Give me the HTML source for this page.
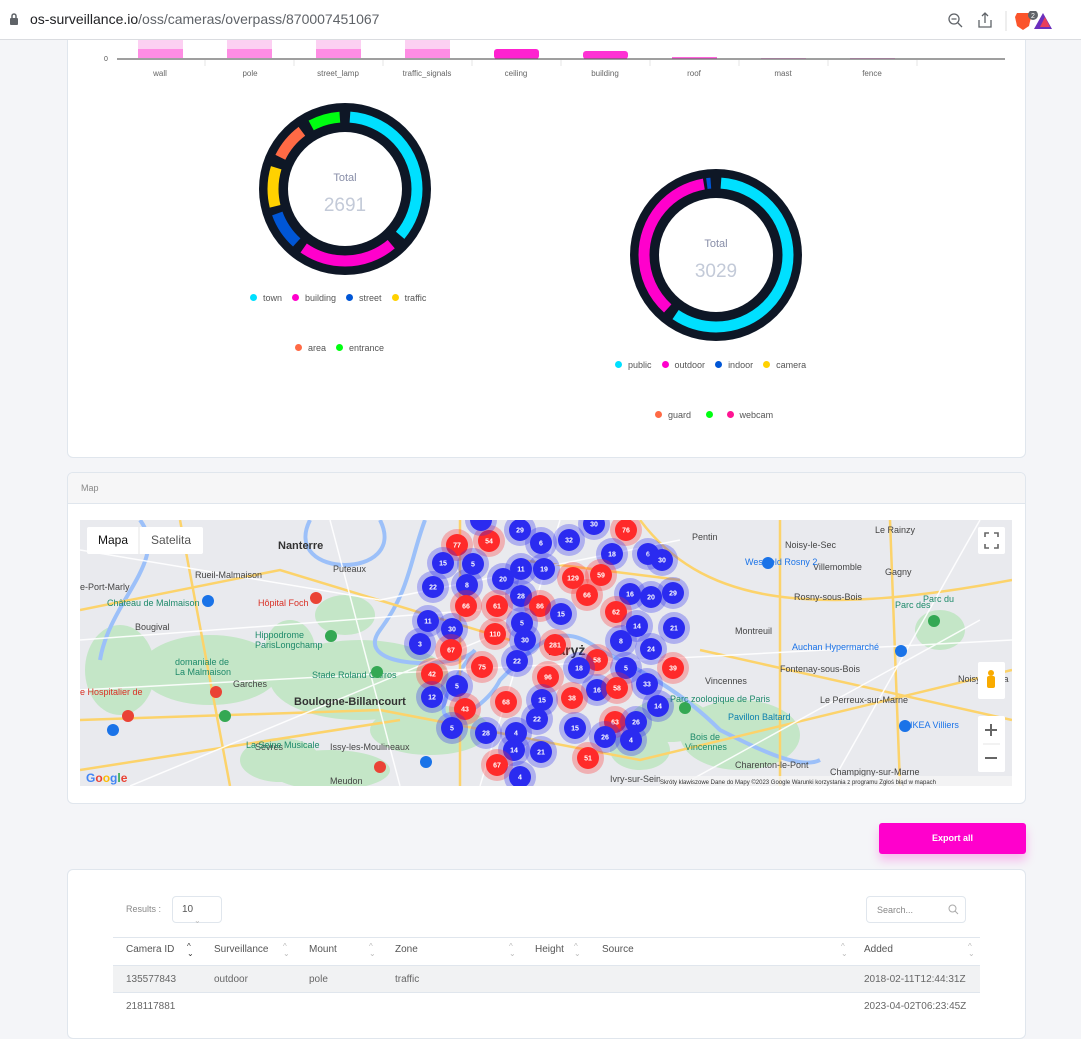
<!DOCTYPE html>
<html><head><meta charset="utf-8"><style>
*{margin:0;padding:0;box-sizing:border-box}
body{width:1081px;height:1021px;overflow:hidden;background:#f4f5f8;font-family:"Liberation Sans",sans-serif;position:relative;color:#3b3f5c}
.abs{position:absolute}
.bar{top:0;left:0;width:1081px;height:40px;background:#fff;border-bottom:1px solid #dadce0}
.tabs{top:0;left:0;width:1081px;height:5px;background:#e8eaed}
.card{background:#fff;border:1px solid #e0e6ed;border-radius:6px}
.lg{font-size:9px;color:#555;position:absolute;white-space:nowrap}
.lg i{display:inline-block;width:7px;height:7px;border-radius:50%;margin-right:6px;vertical-align:-0px}
.th{position:absolute;top:944px;font-size:10px;color:#555}
.td{position:absolute;font-size:10px;color:#666}
</style></head><body>
<div class="abs card" style="left:67px;top:-10px;width:959px;height:468px"></div>
<div class="abs tabs"></div>
<div class="abs bar"></div>
<svg class="abs" style="left:8px;top:12px" width="12" height="14" viewBox="0 0 12 14"><rect x="2" y="6" width="8" height="7" rx="1" fill="#5f6368"/><path d="M4 6V4a2 2 0 0 1 4 0v2" stroke="#5f6368" stroke-width="1.5" fill="none"/></svg>
<div class="abs" style="left:30px;top:11px;font-size:14px;color:#202124">os-surveillance.io<span style="color:#5f6368">/oss/cameras/overpass/870007451067</span></div>
<svg class="abs" style="left:946px;top:11px" width="110" height="20"><circle cx="8" cy="8" r="5" stroke="#5f6368" fill="none" stroke-width="1.3"/><path d="M12 12l4 4M5.5 8h5" stroke="#5f6368" stroke-width="1.3"/><path d="M33 9v7h12v-7M39 2v10M36 5l3-3 3 3" stroke="#5f6368" fill="none" stroke-width="1.3"/><line x1="60" y1="0" x2="60" y2="20" stroke="#ddd"/><path d="M71 2h12l2 4-2 9-6 4-6-4-2-9z" fill="#fb542b"/><circle cx="87" cy="4" r="5" fill="#5f6368"/><text x="85" y="7" font-size="7" fill="#fff">2</text><path d="M113 18L104 2l-9 16z" fill="#6b2fbd" transform="translate(-7 0)"/><path d="M106 6l-5 10h10z" fill="#e83e5b" transform="translate(-7 0)"/></svg>

<!-- bar chart -->
<svg class="abs" style="left:0;top:40px" width="1081" height="45">
<g fill="#ff8de4"><rect x="138" y="0" width="45" height="18"/><rect x="227" y="0" width="45" height="18"/><rect x="316" y="0" width="45" height="18"/><rect x="405" y="0" width="45" height="18"/></g>
<g fill="#fcd0f2"><rect x="138" y="0" width="45" height="9"/><rect x="227" y="0" width="45" height="9"/><rect x="316" y="0" width="45" height="9"/><rect x="405" y="0" width="45" height="9"/></g>
<rect x="494" y="9" width="45" height="10" rx="3" fill="#ff22d0"/><rect x="583" y="11" width="45" height="8" rx="3" fill="#ff33d4"/><rect x="672" y="17" width="45" height="2" fill="#ff66dd"/><rect x="761" y="18" width="45" height="1" fill="#ffaaee"/><rect x="850" y="18" width="45" height="1" fill="#ffaaee"/>
<line x1="117" y1="19" x2="1005" y2="19" stroke="#666" stroke-width="1.2"/>
<text x="104" y="21" font-size="7" fill="#555">0</text>
<g font-size="8" fill="#666" text-anchor="middle"><text x="160" y="36">wall</text><text x="250" y="36">pole</text><text x="338" y="36">street_lamp</text><text x="427" y="36">traffic_signals</text><text x="516" y="36">ceiling</text><text x="605" y="36">building</text><text x="694" y="36">roof</text><text x="783" y="36">mast</text><text x="872" y="36">fence</text></g>
<g stroke="#e4e4e4"><line x1="205" y1="20" x2="205" y2="26"/><line x1="294" y1="20" x2="294" y2="26"/><line x1="383" y1="20" x2="383" y2="26"/><line x1="472" y1="20" x2="472" y2="26"/><line x1="561" y1="20" x2="561" y2="26"/><line x1="650" y1="20" x2="650" y2="26"/><line x1="739" y1="20" x2="739" y2="26"/><line x1="828" y1="20" x2="828" y2="26"/><line x1="917" y1="20" x2="917" y2="26"/></g>
</svg>

<!-- donuts -->
<svg class="abs" style="left:0;top:0" width="1081" height="440">
<g transform="translate(345 189)">
<circle r="86" fill="#0e1726"/><circle r="57" fill="#fff"/>
<g transform="rotate(-90)" fill="none" stroke-width="11">
<circle r="72" stroke="#00e0ff" stroke-dasharray="158.3 500" stroke-dashoffset="-5"/>
<circle r="72" stroke="#ff00cc" stroke-dasharray="94.2 500" stroke-dashoffset="-175.9"/>
<circle r="72" stroke="#0056d6" stroke-dasharray="35.2 500" stroke-dashoffset="-279"/>
<circle r="72" stroke="#ffd100" stroke-dasharray="39 500" stroke-dashoffset="-321.7"/>
<circle r="72" stroke="#ff6a45" stroke-dasharray="34 500" stroke-dashoffset="-372"/>
<circle r="72" stroke="#00ff11" stroke-dasharray="30 500" stroke-dashoffset="-417"/>
</g>
<text y="-8" text-anchor="middle" font-size="11" fill="#888ea8">Total</text>
<text y="22" text-anchor="middle" font-size="19" fill="#c3cad8">2691</text>
</g>
<g transform="translate(716 255)">
<circle r="86" fill="#0e1726"/><circle r="57" fill="#fff"/>
<g transform="rotate(-90)" fill="none" stroke-width="11">
<circle r="72" stroke="#00e0ff" stroke-dasharray="264 500" stroke-dashoffset="-5"/>
<circle r="72" stroke="#ff00cc" stroke-dasharray="161 500" stroke-dashoffset="-279"/>
<circle r="72" stroke="#0056d6" stroke-dasharray="4 500" stroke-dashoffset="-443"/>
</g>
<text y="-8" text-anchor="middle" font-size="11" fill="#888ea8">Total</text>
<text y="22" text-anchor="middle" font-size="19" fill="#c3cad8">3029</text>
</g>
</svg>
<div class="lg" style="left:250px;top:293px"><i style="background:#00e0ff"></i>town &nbsp;&nbsp;&nbsp;<i style="background:#ff00cc"></i>building &nbsp;&nbsp;&nbsp;<i style="background:#0056d6"></i>street &nbsp;&nbsp;&nbsp;<i style="background:#ffd100"></i>traffic</div>
<div class="lg" style="left:295px;top:343px"><i style="background:#ff6a45"></i>area &nbsp;&nbsp;&nbsp;<i style="background:#00ff11"></i>entrance</div>
<div class="lg" style="left:615px;top:360px"><i style="background:#00e0ff"></i>public &nbsp;&nbsp;&nbsp;<i style="background:#ff00cc"></i>outdoor &nbsp;&nbsp;&nbsp;<i style="background:#0056d6"></i>indoor &nbsp;&nbsp;&nbsp;<i style="background:#ffd100"></i>camera</div>
<div class="lg" style="left:655px;top:410px"><i style="background:#ff6a45"></i>guard &nbsp;&nbsp;&nbsp;&nbsp;&nbsp;<i style="background:#00ff11"></i>&nbsp;&nbsp;&nbsp;<i style="background:#ff1493"></i>webcam</div>

<!-- map card -->
<div class="abs card" style="left:67px;top:472px;width:959px;height:332px;overflow:hidden">
<div style="height:31px;background:#f6f6f7;border-bottom:1px solid #e0e6ed;font-size:9px;color:#888;padding:10px 13px">Map</div>
</div>
<svg class="abs" style="left:80px;top:520px" width="932" height="266">
<rect width="932" height="266" fill="#e9eaee"/>
<g fill="#c4e6c7">
<ellipse cx="130" cy="150" rx="70" ry="35"/><ellipse cx="280" cy="160" rx="90" ry="40"/><ellipse cx="350" cy="210" rx="60" ry="25"/><ellipse cx="250" cy="250" rx="60" ry="20"/>
<ellipse cx="265" cy="95" rx="30" ry="20"/><ellipse cx="210" cy="130" rx="25" ry="30"/><ellipse cx="200" cy="240" rx="40" ry="22"/>
<ellipse cx="660" cy="215" rx="60" ry="35"/><ellipse cx="590" cy="200" rx="40" ry="22"/><ellipse cx="860" cy="110" rx="25" ry="20"/><ellipse cx="560" cy="230" rx="30" ry="20"/>
<ellipse cx="40" cy="150" rx="35" ry="45"/>
</g>
<g fill="none" stroke="#9cc0f9" stroke-width="4">
<path d="M60 0C90 40 30 80 20 140M230 0C200 60 330 60 300 0"/>
<path d="M345 0C330 40 330 70 300 110C270 150 380 150 395 130C320 230 400 200 420 160C460 120 480 100 520 130C560 150 600 170 640 210C680 230 720 250 740 240"/>
</g>
<g fill="none" stroke="#fcd36b" stroke-width="2.5">
<path d="M0 90L200 50L430 120M0 200L300 190L560 240L932 150M100 0L150 266M380 0L380 266M560 0C620 80 720 100 932 60M700 0L700 266M810 0L820 266M0 250L320 200M620 130L932 200M440 40L600 60"/>
</g>
<g fill="none" stroke="#fff" stroke-width="1.5" opacity=".9">
<path d="M0 30L300 80L600 20M0 120L400 90M50 266L450 100M600 266L900 100M480 0L400 266M900 0L750 266M0 170L932 120M250 0L320 266"/>
</g>
<g font-size="11" fill="#333" font-weight="bold"><text x="198" y="29">Nanterre</text><text x="214" y="185">Boulogne-Billancourt</text><text x="468" y="135" font-size="14">Paryż</text></g>
<g font-size="9" fill="#444"><text x="115" y="58">Rueil-Malmaison</text><text x="253" y="52">Puteaux</text><text x="55" y="110">Bougival</text><text x="153" y="167">Garches</text><text x="175" y="230">Sèvres</text><text x="250" y="230">Issy-les-Moulineaux</text><text x="250" y="264">Meudon</text><text x="0" y="70">e-Port-Marly</text><text x="612" y="20">Pentin</text><text x="705" y="28">Noisy-le-Sec</text><text x="733" y="50">Villemomble</text><text x="805" y="55">Gagny</text><text x="795" y="13">Le Rainzy</text><text x="714" y="80">Rosny-sous-Bois</text><text x="655" y="114">Montreuil</text><text x="700" y="152">Fontenay-sous-Bois</text><text x="625" y="164">Vincennes</text><text x="740" y="183">Le Perreux-sur-Marne</text><text x="878" y="162">Noisy-le-Gra</text><text x="655" y="248">Charenton-le-Pont</text><text x="750" y="255">Champigny-sur-Marne</text><text x="530" y="262">Ivry-sur-Sein</text></g>
<g font-size="9" fill="#1e8a6a"><text x="27" y="86">Château de Malmaison</text><text x="175" y="118">Hippodrome</text><text x="175" y="128">ParisLongchamp</text><text x="232" y="158">Stade Roland Garros</text><text x="166" y="228">La Seine Musicale</text><text x="590" y="182">Parc zoologique de Paris</text><text x="610" y="220">Bois de</text><text x="605" y="230">Vincennes</text><text x="815" y="88">Parc des</text><text x="843" y="82">Parc du</text><text x="648" y="200" fill="#0a7fae">Pavillon Baltard</text><text x="95" y="145">domaniale de</text><text x="95" y="155">La Malmaison</text></g>
<g font-size="9" fill="#1a73e8"><text x="665" y="45">Westfield Rosny 2</text><text x="712" y="130">Auchan Hypermarché</text><text x="830" y="208">IKEA Villiers</text></g>
<g font-size="9" fill="#d93025"><text x="178" y="86">Hôpital Foch</text><text x="0" y="175">e Hospitalier de</text></g>
<g fill="#ea4335"><circle cx="236" cy="78" r="6"/><circle cx="136" cy="172" r="6"/><circle cx="48" cy="196" r="6"/><circle cx="300" cy="247" r="6"/></g>
<g fill="#34a853"><circle cx="251" cy="116" r="6"/><circle cx="297" cy="152" r="6"/><circle cx="854" cy="101" r="6"/><circle cx="145" cy="196" r="6"/><circle cx="605" cy="188" r="6"/></g>
<g fill="#1a73e8"><circle cx="128" cy="81" r="6"/><circle cx="346" cy="242" r="6"/><circle cx="688" cy="43" r="6"/><circle cx="821" cy="131" r="6"/><circle cx="825" cy="206" r="6"/><circle cx="33" cy="210" r="6"/></g>
<text x="6" y="262" font-size="12" font-weight="bold" fill="#4285f4">G<tspan fill="#ea4335">o</tspan><tspan fill="#fbbc05">o</tspan><tspan fill="#4285f4">g</tspan><tspan fill="#34a853">l</tspan><tspan fill="#ea4335">e</tspan></text>
<rect x="580" y="256" width="352" height="10" fill="#f5f5f5" opacity=".8"/>
<text x="580" y="264" font-size="6" fill="#333">Skróty klawiszowe   Dane do Mapy ©2023 Google   Warunki korzystania z programu   Zgłoś błąd w mapach</text>
<g id="cl" font-size="7" font-weight="bold" fill="#fff" text-anchor="middle"></g>
<rect x="7" y="7" width="116" height="27" fill="#fff" rx="2"/>
<line x1="59" y1="7" x2="59" y2="34" stroke="#e6e6e6"/>
<text x="18" y="24" font-size="12" fill="#111">Mapa</text><text x="71" y="24" font-size="12" fill="#555">Satelita</text>
<rect x="898" y="7" width="27" height="27" fill="#fff" rx="2"/>
<path d="M905 17v-4h4M914 13h4v4M918 24v4h-4M909 28h-4v-4" stroke="#666" stroke-width="1.6" fill="none"/>
<rect x="898" y="142" width="27" height="37" fill="#fff" rx="2"/>
<circle cx="911" cy="153" r="3" fill="#f9ab00"/><rect x="907" y="156" width="8" height="12" rx="2" fill="#f9ab00"/>
<rect x="898" y="196" width="27" height="56" fill="#fff" rx="2"/><line x1="903" y1="224" x2="920" y2="224" stroke="#e6e6e6"/>
<path d="M905 210h12M911 204v12M905 238h12" stroke="#666" stroke-width="2"/>
</svg>
<script>
var d=[[457,545,77,1],[489,541,54,1],[520,530,29],[541,543,6],[569,540,32],[594,524,30],[626,530,76,1],[443,563,15],[473,564,5],[612,554,18],[648,554,6],[662,560,30],[521,569,11],[544,569,19],[503,579,20],[467,585,8],[433,587,22],[573,578,129,1],[601,575,59,1],[630,594,16],[651,597,20],[673,593,29],[521,596,28],[587,595,66,1],[466,606,66,1],[497,606,61,1],[540,606,86,1],[561,614,15],[616,612,62,1],[428,621,11],[452,629,30],[495,634,110,1],[522,623,5],[525,640,30],[637,626,14],[674,628,21],[420,644,3],[451,650,67,1],[555,645,281,1],[621,641,8],[651,649,24],[597,660,58,1],[482,667,75,1],[517,661,22],[548,677,96,1],[626,668,5],[673,668,39,1],[579,668,18],[432,674,42,1],[457,686,5],[597,690,16],[617,688,58,1],[647,684,33],[572,698,38,1],[432,697,12],[465,709,43,1],[506,702,68,1],[542,700,15],[658,706,14],[537,719,22],[452,728,5],[486,733,28],[516,733,4],[575,728,15],[615,722,63,1],[636,722,26],[605,737,26],[631,740,4],[514,750,14],[541,752,21],[497,765,67,1],[588,758,51,1],[520,777,4],[481,520,'']];
var s='';d.forEach(function(c){var x=c[0]-80,y=c[1]-520,col=c[3]?'#ff2a2a':'#2b2bf0';s+='<circle cx="'+x+'" cy="'+y+'" r="16" fill="'+col+'" opacity=".3"/><circle cx="'+x+'" cy="'+y+'" r="11" fill="'+col+'"/><text x="'+x+'" y="'+(y+2.5)+'">'+c[2]+'</text>';});
document.getElementById('cl').innerHTML=s;
</script>

<div class="abs" style="left:879px;top:823px;width:147px;height:31px;background:#ff00cc;border-radius:3px;box-shadow:0 6px 10px rgba(255,0,204,.25);color:#fff;font-size:9px;font-weight:bold;text-align:center;line-height:31px">Export all</div>

<div class="abs card" style="left:67px;top:869px;width:959px;height:170px"></div>
<div class="abs" style="left:126px;top:904px;font-size:9px;color:#888">Results :</div>
<div class="abs" style="left:172px;top:896px;width:50px;height:27px;border:1px solid #e0e6ed;border-radius:4px;font-size:10px;color:#555;padding:7px 9px">10 <span style="color:#bbb;margin-left:12px;font-size:8px">⌄</span></div>
<div class="abs" style="left:866px;top:896px;width:100px;height:27px;border:1px solid #e0e6ed;border-radius:4px;font-size:9px;color:#888;padding:8px 10px">Search...</div>
<svg class="abs" style="left:948px;top:904px" width="11" height="11"><circle cx="4.5" cy="4.5" r="3.5" stroke="#aaa" fill="none"/><path d="M7 7l3 3" stroke="#aaa"/></svg>
<div class="abs" style="left:113px;top:937px;width:867px;height:1px;background:#e0e6ed"></div>
<div class="th" style="left:126px">Camera ID</div><div class="th" style="left:214px">Surveillance</div><div class="th" style="left:309px">Mount</div><div class="th" style="left:395px">Zone</div><div class="th" style="left:535px">Height</div><div class="th" style="left:602px">Source</div><div class="th" style="left:864px">Added</div>
<div class="abs" style="left:0;top:943px;font-size:8px;color:#bbb;line-height:7px">
<span class="abs" style="left:187px;color:#333">^<br>⌄</span><span class="abs" style="left:283px">^<br>⌄</span><span class="abs" style="left:369px">^<br>⌄</span><span class="abs" style="left:509px">^<br>⌄</span><span class="abs" style="left:574px">^<br>⌄</span><span class="abs" style="left:841px">^<br>⌄</span><span class="abs" style="left:968px">^<br>⌄</span></div>
<div class="abs" style="left:113px;top:965px;width:867px;height:28px;background:#f1f2f3;border-top:1px solid #e0e6ed;border-bottom:1px solid #e0e6ed"></div>
<div class="td" style="left:126px;top:974px">135577843</div><div class="td" style="left:214px;top:974px">outdoor</div><div class="td" style="left:309px;top:974px">pole</div><div class="td" style="left:395px;top:974px">traffic</div><div class="td" style="left:864px;top:974px">2018-02-11T12:44:31Z</div>
<div class="td" style="left:126px;top:1001px">218117881</div><div class="td" style="left:864px;top:1001px">2023-04-02T06:23:45Z</div>
</body></html>
